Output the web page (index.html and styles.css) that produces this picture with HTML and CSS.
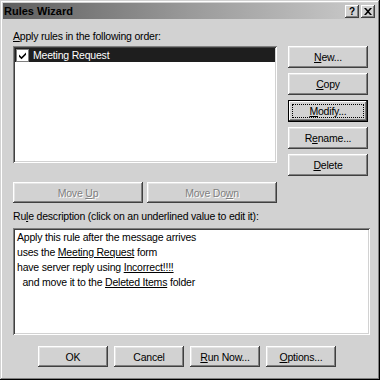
FILE: index.html
```html
<!DOCTYPE html>
<html>
<head>
<meta charset="utf-8">
<link rel="stylesheet" href="styles.css">
</head>
<body>
<div class="window">
  <div class="titlebar">
    <span class="title">Rules Wizard</span>
    <div class="tbtns">
      <span class="tbtn help">?</span>
      <span class="tbtn close"><svg width="8" height="7" viewBox="0 0 8 7"><path d="M0 0h2l2 2.3L6 0h2L5 3.5 8 7H6L4 4.7 2 7H0l3-3.5z" fill="#000"/></svg></span>
    </div>
  </div>
  <div class="content">
    <div class="label"><u>A</u>pply rules in the following order:</div>
    <div class="toprow">
      <div class="leftcol">
        <div class="listbox sunken">
          <div class="row selected">
            <span class="check"><svg width="9" height="9" viewBox="0 0 9 9"><path d="M1 3.5l2.5 2.5L8 1.5v2.3L3.5 8.2 1 5.7z" fill="#000"/></svg></span>
            <span class="rowtext">Meeting Request</span>
          </div>
        </div>
        <div class="moverow">
          <button class="btn disabled wide">Move <u>U</u>p</button>
          <button class="btn disabled wide">Move Do<u>w</u>n</button>
        </div>
      </div>
      <div class="rightcol">
        <button class="btn"><u>N</u>ew...</button>
        <button class="btn"><u>C</u>opy</button>
        <button class="btn default"><u>M</u>odify...</button>
        <button class="btn">R<u>e</u>name...</button>
        <button class="btn"><u>D</u>elete</button>
      </div>
    </div>
    <div class="label desc-label">Ru<u>l</u>e description (click on an underlined value to edit it):</div>
    <div class="desc sunken">
      <div class="line">Apply this rule after the message arrives</div>
      <div class="line">uses the <span class="link">Meeting Request</span> form</div>
      <div class="line">have server reply using <span class="link">Incorrect!!!!</span></div>
      <div class="line indent">  and move it to the <span class="link">Deleted Items</span> folder</div>
    </div>
    <div class="bottomrow">
      <button class="btn small">OK</button>
      <button class="btn small">Cancel</button>
      <button class="btn small"><u>R</u>un Now...</button>
      <button class="btn small"><u>O</u>ptions...</button>
    </div>
  </div>
</div>
</body>
</html>
```

FILE: styles.css
```css
* { box-sizing: border-box; }
html, body { margin: 0; padding: 0; }
body {
  width: 380px;
  height: 380px;
  font-family: "Liberation Sans", Arial, sans-serif;
  font-size: 10.5px;
  letter-spacing: -0.2px;
  color: #000;
  background: #d2d2d2;
}
.window {
  width: 380px;
  height: 380px;
  background: #d2d2d2;
  padding: 3px;
  box-shadow: inset -1px -1px #000, inset 1px 1px #d2d2d2, inset -2px -2px #808080, inset 2px 2px #fff;
}
.titlebar {
  height: 16px;
  background: linear-gradient(to right, #5e5e5e, #9a9a9a 50%, #cdcdcd);
  display: flex;
  align-items: center;
  justify-content: space-between;
  padding: 0 2px 0 1px;
}
.title {
  font-weight: bold;
  font-size: 11px;
  letter-spacing: 0;
  color: #000;
  line-height: 16px;
}
.tbtns { display: flex; gap: 2px; }
.tbtn {
  width: 14px;
  height: 13px;
  background: #d2d2d2;
  box-shadow: inset -1px -1px #404040, inset 1px 1px #fff, inset -2px -2px #808080;
  display: flex;
  align-items: center;
  justify-content: center;
  font-weight: bold;
  font-size: 10px;
  letter-spacing: 0;
  line-height: 13px;
}
.content {
  padding: 11px 9px 0 10px;
}
.label {
  height: 13px;
  line-height: 13px;
  margin-bottom: 3px;
  white-space: nowrap;
}
.toprow {
  display: flex;
  gap: 11px;
}
.leftcol {
  width: 264px;
  display: flex;
  flex-direction: column;
}
.sunken {
  background: #fff;
  box-shadow: inset 1px 1px #808080, inset -1px -1px #fff, inset 2px 2px #404040, inset -2px -2px #d2d2d2;
}
.listbox {
  height: 117px;
  padding: 2px;
}
.row {
  height: 14px;
  display: flex;
  align-items: center;
  padding-left: 1px;
}
.row.selected {
  background: #1e1e1e;
  color: #fff;
}
.check {
  width: 13px;
  height: 13px;
  background: #fff;
  border: 1px solid #808080;
  display: flex;
  align-items: center;
  justify-content: center;
  margin-right: 4px;
}
.rowtext { line-height: 14px; }
.moverow {
  display: flex;
  gap: 4px;
  margin-top: 19px;
}
.rightcol {
  width: 80px;
  display: flex;
  flex-direction: column;
  gap: 5px;
}
.btn {
  appearance: none;
  -webkit-appearance: none;
  border: none;
  margin: 0;
  padding: 0;
  height: 22px;
  background: #d2d2d2;
  font-family: "Liberation Sans", Arial, sans-serif;
  font-size: 10.5px;
  letter-spacing: -0.2px;
  color: #000;
  box-shadow: inset -1px -1px #404040, inset 1px 1px #fff, inset -2px -2px #808080, inset 2px 2px #e4e4e4;
  display: flex;
  align-items: center;
  justify-content: center;
  white-space: pre;
}
.btn.wide { width: 130px; height: 21px; }
.btn.disabled {
  color: #808080;
  text-shadow: 1px 1px #fff;
}
.btn.default {
  position: relative;
  box-shadow: inset 0 0 0 1px #000, inset -2px -2px #404040, inset 2px 2px #fff, inset -3px -3px #808080;
}
.btn.default::after {
  content: "";
  position: absolute;
  left: 4px;
  top: 4px;
  right: 4px;
  bottom: 4px;
  border: 1px dotted #000;
}
.desc-label {
  margin-top: 7px;
  margin-bottom: 5px;
}
.desc {
  height: 107px;
  margin-right: -2px;
  padding: 2px 3px 2px 4px;
}
.line {
  line-height: 15px;
  height: 15px;
  white-space: pre;
}
.link { text-decoration: underline; }
.bottomrow {
  display: flex;
  gap: 6px;
  margin-top: 11px;
  padding-left: 25px;
}
.btn.small { width: 70px; height: 21px; }
```
